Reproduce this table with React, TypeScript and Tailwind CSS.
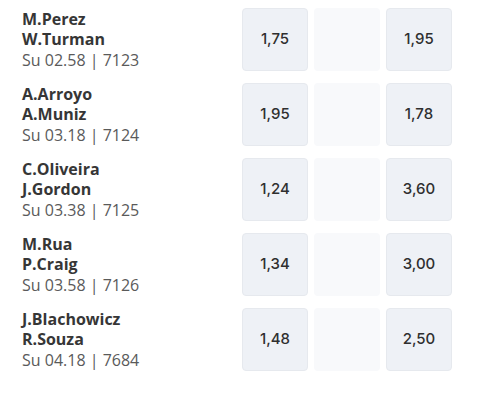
import React from 'react';

type Match = {
  home: string;
  away: string;
  meta: string;
  odd1: string;
  odd2: string;
};

const matches: Match[] = [
  { home: 'M.Perez', away: 'W.Turman', meta: 'Su 02.58 | 7123', odd1: '1,75', odd2: '1,95' },
  { home: 'A.Arroyo', away: 'A.Muniz', meta: 'Su 03.18 | 7124', odd1: '1,95', odd2: '1,78' },
  { home: 'C.Oliveira', away: 'J.Gordon', meta: 'Su 03.38 | 7125', odd1: '1,24', odd2: '3,60' },
  { home: 'M.Rua', away: 'P.Craig', meta: 'Su 03.58 | 7126', odd1: '1,34', odd2: '3,00' },
  { home: 'J.Blachowicz', away: 'R.Souza', meta: 'Su 04.18 | 7684', odd1: '1,48', odd2: '2,50' },
];

const OddBox = ({ value }: { value?: string }) => {
  if (!value) {
    return <div className="w-[66px] h-[63px] rounded bg-[#f8f9fb]" />;
  }
  return (
    <div className="w-[66px] h-[63px] rounded bg-[#eef1f6] border border-[#e6e9ee] flex items-center justify-center text-[15px] font-medium text-[#2f2f2f] font-['Inter',sans-serif]">
      {value}
    </div>
  );
};

export default function App() {
  return (
    <div className="w-[477px] h-[400px] bg-white pt-2 pl-[22px] pr-[25px] flex flex-col gap-3">
      {matches.map((m) => (
        <div key={m.meta} className="flex items-center">
          <div className="flex-1 font-['Open_Sans',sans-serif] text-[16px] leading-[20.5px]">
            <div className="font-bold text-[#363636]">{m.home}</div>
            <div className="font-bold text-[#363636]">{m.away}</div>
            <div className="text-[#5a5a5a]">{m.meta}</div>
          </div>
          <div className="flex gap-[6px]">
            <OddBox value={m.odd1} />
            <OddBox />
            <OddBox value={m.odd2} />
          </div>
        </div>
      ))}
    </div>
  );
}
